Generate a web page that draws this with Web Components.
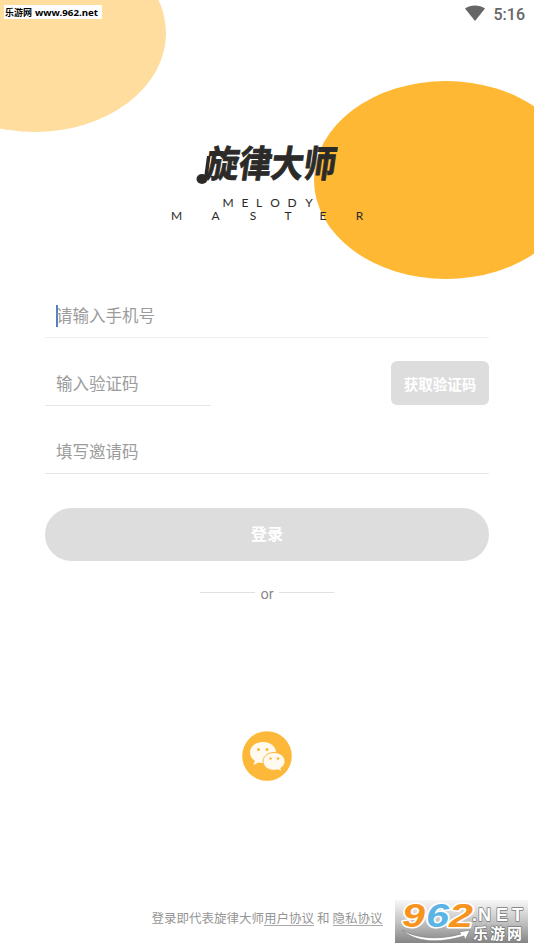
<!DOCTYPE html>
<html lang="zh"><head><meta charset="utf-8"><title>旋律大师</title>
<style>html,body{margin:0;background:#fff}</style></head><body>
<login-page></login-page>
<script>
const define=(name,html)=>{const t=document.createElement('template');t.innerHTML=html;
customElements.define(name,class extends HTMLElement{constructor(){super();this.attachShadow({mode:'open'}).append(t.content.cloneNode(true));}});};

define('backdrop-circles',`<style>:host{position:absolute;inset:0;z-index:-1}svg{display:block}</style>
<svg width="534" height="949"><ellipse cx="35" cy="33" rx="131" ry="99" fill="#ffdd9f"/><ellipse cx="446" cy="180" rx="132" ry="99" fill="#ffb833"/></svg>`);

define('site-tag',`<style>:host{display:block;width:98px;height:14px;background:#fff;color:#000}svg{display:block}</style>
<svg width="98" height="14"><g fill="#000" font-weight="700"><text x="1" y="11" font-size="9" textLength="27" lengthAdjust="spacingAndGlyphs" font-family="Noto Sans CJK SC,sans-serif">乐游网</text><text x="31" y="11" font-size="9.500" textLength="63" lengthAdjust="spacingAndGlyphs" font-family="Noto Sans,sans-serif">www.962.net</text></g></svg>`);

define('status-bar',`<style>:host{display:flex;justify-content:space-between;height:28px;padding:5px 9px 0 4px;box-sizing:border-box}
div{display:flex;gap:8px;font:500 16px/19px Roboto,sans-serif;color:#666}svg{display:block;margin-left:-1px}span{margin-left:1px}</style>
<site-tag></site-tag><div><svg width="20" height="18" viewBox="0 0 20 18"><path d="M0 3.5C5.5-.6 14.500-.6 20 3.500L10 16Z" fill="#666"/></svg><span>5:16</span></div>`);

define('brand-logo',`<style>:host{display:block;height:112px;padding-top:112px}svg{display:block;margin:auto;overflow:visible}</style>
<svg width="214" height="92" viewBox="160 140 214 92" fill="#2b2a28"><text transform="translate(205 176.500) skewX(-8) scale(.9 1.020)" font-size="36" font-weight="700" stroke="#2b2a28" stroke-width=".9" font-family="Noto Sans CJK SC,sans-serif">旋律大师</text>
<ellipse cx="202" cy="179" rx="5.500" ry="5"/><path d="M204 178L207 156L210.500 156L207.500 179Z"/>
<g font-family="Lato,sans-serif" font-size="12" text-anchor="middle"><text y="206.500" x="228 245 259 275 292 309">MELODY</text><text y="220" x="176.500 215.500 253 288 323 359.500">MASTER</text></g></svg>`);

define('text-field',`<style>:host{display:flex;box-sizing:border-box;height:44px;width:var(--w,444px);border-bottom:1px solid #e6e6e6;padding:2px 0 0 11px;align-items:center;color:#9c9c9c;font:16.500px/24px Roboto,"Noto Sans CJK SC",sans-serif}
:host([active])::before{content:"";width:2px;height:22px;background:#5580c8;margin:-2px -2px 0 0}:host([active]){border-color:#f0f0f0}</style><slot></slot>`);

define('grey-button',`<style>:host{display:flex;align-items:center;justify-content:center;background:#ddd;color:#fff;border-radius:6px;font:700 14.500px/20px "Noto Sans CJK SC",sans-serif}</style><slot></slot>`);

define('login-form',`<style>:host{display:flex;flex-direction:column;gap:24px;padding:42px 45px 0}div{display:flex;justify-content:space-between}
.code{box-sizing:border-box;padding-top:2px;width:98px;height:44px;margin:-1px 0 1px}.go{box-sizing:border-box;height:53px;padding-bottom:3px;border-radius:27px;font-size:16.200px;margin-top:10px}</style>
<text-field active>请输入手机号</text-field><div><text-field style="--w:166px">输入验证码</text-field><grey-button class="code">获取验证码</grey-button></div><text-field>填写邀请码</text-field><grey-button class="go">登录</grey-button>`);

define('or-divider',`<style>:host{display:flex;justify-content:center;align-items:center;gap:5px;margin-top:23px;font:14.500px/20px Roboto,sans-serif;color:#888}
i{width:55px;height:1px;background:#e0e0e0;margin-bottom:3px}span{padding-top:1px;margin-bottom:-1px}</style><i></i><span>or</span><i></i>`);

define('wechat-button',`<style>:host{display:block;margin-top:126px}svg{display:block;margin:auto}</style>
<svg width="52" height="52" viewBox="0 0 52 52"><circle cx="26" cy="26" r="24.800" fill="#fdb83a"/><path fill="#fffaf0" d="M22 12C14.500 12 9 16.600 9 22.500c0 3.500 1.800 6.200 4.800 8.200L12.500 35l5-2.500c1.500.4 3 .6 4.500.6 7.400 0 13-4.700 13-10.600S29.400 12 22 12Z"/>
<path fill="#fffaf0" stroke="#fdb83a" d="M33 22.500c-6.200 0-11 3.900-11 8.900s4.800 8.900 11 8.900c1.400 0 2.700-.2 4-.6l4 2.100-1.200-3.600c2.600-1.700 4.200-4.100 4.200-6.800 0-5-4.800-8.900-11-8.900Z"/><g fill="#fdb83a"><circle cx="17.500" cy="19.500" r="1.500"/><circle cx="26" cy="19.500" r="1.500"/><circle cx="29.500" cy="28.500" r="1.300"/><circle cx="37" cy="28.500" r="1.300"/></g></svg>`);

define('agreement-line',`<style>:host{display:block;text-align:center;margin-top:127px;font:12.500px/20px Roboto,"Noto Sans CJK SC",sans-serif;color:#959595;white-space:nowrap}
span{border-bottom:1px solid #aaa;display:inline-block;line-height:12px}</style>登录即代表旋律大师<span>用户协议</span> 和 <span>隐私协议</span>`);

define('site-watermark',`<style>:host{position:absolute;left:395px;top:900px}svg{display:block;overflow:visible}</style>
<svg width="133" height="43" viewBox="0 0 133 43"><defs><linearGradient id="g" x2="0" y2="1"><stop stop-color="#f8f8f8"/><stop offset=".5" stop-color="#c4c4c4"/><stop offset="1" stop-color="#858585"/></linearGradient></defs><rect width="133" height="43" fill="url(#g)"/>
<g font-family="Liberation Sans,sans-serif" font-weight="700" paint-order="stroke" stroke-linejoin="round"><g font-size="33" font-style="italic" stroke="#fff" stroke-width="3"><text x="7" y="27" fill="#f7941d" textLength="23" lengthAdjust="spacingAndGlyphs">9</text><text x="31" y="27" fill="#5bb4e5" textLength="23" lengthAdjust="spacingAndGlyphs">6</text><text x="54" y="27" fill="#f7941d" textLength="24" lengthAdjust="spacingAndGlyphs">2</text></g>
<g fill="#fff" stroke="#777" stroke-width="1.400"><text x="77 83 101 117" y="20.500" font-size="18">.NET</text><text x="78 95 112" y="38.500" font-size="15" font-family="Noto Sans CJK SC,sans-serif">乐游网</text></g></g>
<path d="M7 30C22 39 45 40 66 34L64 32L75 30L70 40L69 36C43 44 20 42 7 30Z" fill="#fff" stroke="#777" stroke-width=".6"/></svg>`);

define('login-page',`<style>:host{display:block;position:relative;z-index:0;width:534px;height:949px;overflow:hidden}</style>
<backdrop-circles></backdrop-circles><status-bar></status-bar><brand-logo></brand-logo><login-form></login-form><or-divider></or-divider><wechat-button></wechat-button><agreement-line></agreement-line><site-watermark></site-watermark>`);
</script></body></html>
